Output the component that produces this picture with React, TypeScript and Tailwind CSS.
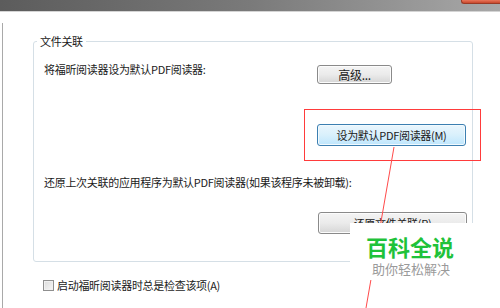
export default function App() {
  const font = { fontFamily: '"Noto Sans CJK SC", "Noto Sans", sans-serif' };
  return (
    <div
      className="relative w-[500px] h-[308px] overflow-hidden bg-white text-[11px] leading-[12px] tracking-[-0.3px] text-[#1a1a1a]"
      style={font}
    >
      {/* window title strip */}
      <div className="relative h-[11px] bg-gradient-to-r from-[#5c5c5c] via-[#7a7a7a] to-[#a8a8a8]">
        <div className="absolute top-0 right-0 w-[39px] h-[4px] rounded-bl-[3px] bg-gradient-to-b from-[#e9765a] to-[#c8472c] border-l border-b border-[#9a3b26]" />
      </div>
      <div className="h-[1px] bg-[#d4d4d4]" />

      {/* dialog body */}
      <div className="mt-[11px] ml-[2px] h-[285px] border-l border-[#a9a9a9] pt-[12px]">
        <fieldset className="ml-[30px] w-[440px] rounded-[3px] border border-[#d5dfe6] pb-[27px]">
          <legend className="ml-[3px] px-[3px] leading-[12px]">文件关联</legend>

          <div className="mt-[16px] flex items-start pl-[10px]">
            <span className="w-[273px]">将福昕阅读器设为默认PDF阅读器:</span>
            <button className="mt-[2px] h-[19px] w-[75px] rounded-[3px] border border-[#8a8a8a] bg-gradient-to-b from-[#f4f4f4] via-[#ebebeb] to-[#d6d6d6] text-[12px] leading-[17px] shadow-[inset_0_0_0_1px_#fcfcfc]">
              高级...
            </button>
          </div>

          <div className="mt-[40px] pl-[283px]">
            <button className="h-[22px] w-[149px] rounded-[3px] border border-[#3c7fb1] bg-gradient-to-b from-[#eaf6fd] via-[#d9f0fc] to-[#bee6fd] leading-[20px] shadow-[inset_0_0_0_1px_#f2fafe]">
              设为默认PDF阅读器(M)
            </button>
          </div>

          <div className="mt-[30px] pl-[10px]">
            还原上次关联的应用程序为默认PDF阅读器(如果该程序未被卸载):
          </div>

          <div className="mt-[24px] pl-[284px]">
            <button className="h-[22px] w-[149px] rounded-[3px] border border-[#8a8a8a] bg-gradient-to-b from-[#f4f4f4] via-[#ebebeb] to-[#d6d6d6] leading-[20px] shadow-[inset_0_0_0_1px_#fcfcfc]">
              还原文件关联(R)
            </button>
          </div>
        </fieldset>

        <label className="ml-[40px] mt-[17px] flex items-center gap-[3px]">
          <span className="h-[11px] w-[11px] border border-[#8f8f8f] bg-gradient-to-br from-[#dcdcdc] to-[#f6f6f6] shadow-[inset_0_0_0_1px_#f0f0f0]" />
          <span>启动福昕阅读器时总是检查该项(A)</span>
        </label>
      </div>

      {/* annotation: red frame */}
      <div className="absolute left-[304px] top-[109px] h-[52px] w-[177px] border border-[#ff3b3b]" />

      {/* annotation: red pointer line */}
      <svg className="absolute left-0 top-0" width="500" height="308">
        <line x1="394" y1="147" x2="366" y2="308" stroke="#ff4a4a" strokeWidth="1" />
      </svg>

      {/* watermark */}
      <div className="absolute left-[350px] top-[223px] h-[57px] w-[150px] bg-white pl-[16px] pt-[12px] tracking-normal">
        <div className="text-[22px] font-bold leading-[22px] text-[#1fc23a]">百科全说</div>
        <div className="mt-[4px] pl-[6px] text-[13px] leading-[15px] text-[#9a9a9a]">助你轻松解决</div>
      </div>
    </div>
  );
}
